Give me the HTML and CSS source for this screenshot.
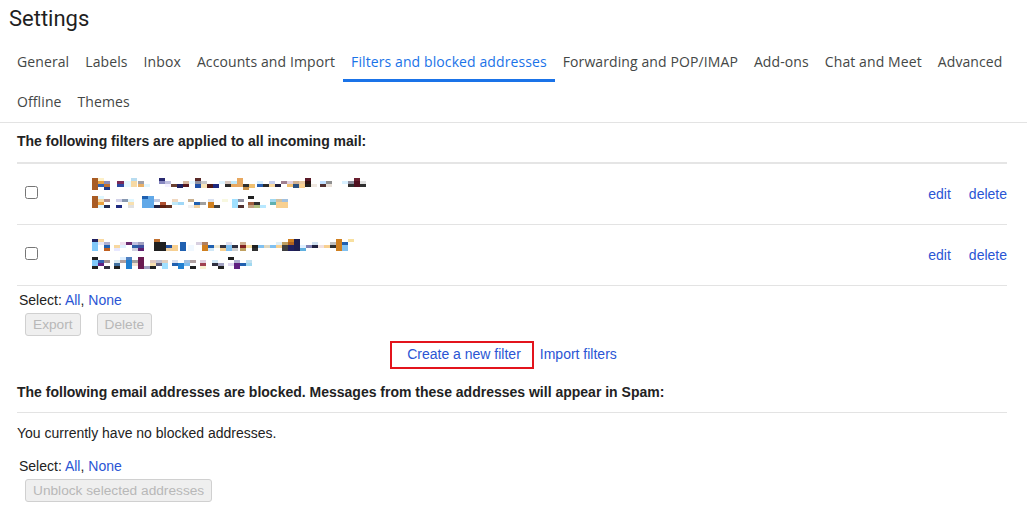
FILE: index.html
```html
<!DOCTYPE html>
<html lang="en">
<head>
<meta charset="utf-8">
<title>Settings</title>
<link rel="stylesheet" href="styles.css">
</head>
<body>
<h1 class="title">Settings</h1>
<nav class="tabs">
  <div class="tab-row">
    <span class="tab">General</span>
    <span class="tab">Labels</span>
    <span class="tab">Inbox</span>
    <span class="tab">Accounts and Import</span>
    <span class="tab active">Filters and blocked addresses</span>
    <span class="tab">Forwarding and POP/IMAP</span>
    <span class="tab">Add-ons</span>
    <span class="tab">Chat and Meet</span>
    <span class="tab">Advanced</span>
  </div>
  <div class="tab-row">
    <span class="tab">Offline</span>
    <span class="tab">Themes</span>
  </div>
</nav>
<main class="content">
  <div class="heading">The following filters are applied to all incoming mail:</div>
  <div class="filters">
    <div class="filter-row">
      <div class="check-cell"><input type="checkbox" class="cb"></div>
      <div class="desc">
        <svg class="mosaic" width="280" height="12" viewBox="0 0 280 12">
          <rect x="0" y="0" width="6" height="12" fill="#a95c24"/><rect x="6" y="0" width="6" height="3" fill="#fdf0c8"/><rect x="6" y="3" width="6" height="3" fill="#e8a040"/><rect x="6" y="6" width="6" height="3" fill="#3060b0"/><rect x="12" y="3" width="6" height="3" fill="#8c8cb8"/><rect x="12" y="6" width="6" height="3" fill="#c07030"/><rect x="12" y="9" width="6" height="3" fill="#203a88"/>
          <rect x="25" y="3" width="7" height="3" fill="#7a2a58"/><rect x="25" y="6" width="7" height="3" fill="#2c48a0"/><rect x="32" y="3" width="7" height="6" fill="#e4f8ff"/><rect x="39" y="0" width="6" height="3" fill="#b8dcf0"/><rect x="39" y="3" width="6" height="6" fill="#f6d9a4"/>
          <rect x="46" y="3" width="6" height="3" fill="#a0a0a8"/><rect x="46" y="6" width="6" height="3" fill="#e8b068"/><rect x="52" y="6" width="6" height="3" fill="#e0f6ff"/>
          <rect x="67" y="0" width="6" height="3" fill="#2a2a70"/><rect x="67" y="3" width="6" height="3" fill="#8888c0"/><rect x="73" y="3" width="6" height="3" fill="#c0c0e0"/><rect x="73" y="6" width="6" height="3" fill="#f4f0ff"/><rect x="79" y="6" width="6" height="3" fill="#6a4030"/><rect x="85" y="6" width="6" height="4" fill="#1e2060"/><rect x="91" y="3" width="6" height="3" fill="#d8b8a0"/><rect x="91" y="6" width="6" height="3" fill="#5a1a20"/><rect x="97" y="3" width="6" height="3" fill="#e8f8ff"/><rect x="103" y="0" width="6" height="3" fill="#5a2a28"/><rect x="103" y="3" width="6" height="3" fill="#9090a0"/><rect x="103" y="6" width="6" height="4" fill="#2050a8"/><rect x="109" y="3" width="6" height="3" fill="#c8c8c8"/><rect x="109" y="6" width="6" height="4" fill="#f8e4b8"/>
          <rect x="115" y="6" width="6" height="4" fill="#501818"/><rect x="121" y="6" width="6" height="4" fill="#1e2a80"/><rect x="127" y="3" width="6" height="3" fill="#e0f4ff"/><rect x="133" y="3" width="6" height="3" fill="#d8c8c0"/><rect x="133" y="6" width="6" height="3" fill="#2a2a2a"/><rect x="139" y="3" width="6" height="3" fill="#c0e8f8"/><rect x="139" y="6" width="6" height="3" fill="#e8a860"/><rect x="145" y="0" width="6" height="9" fill="#e8a860"/><rect x="151" y="6" width="6" height="3" fill="#303030"/><rect x="151" y="9" width="6" height="3" fill="#c89048"/><rect x="157" y="6" width="6" height="4" fill="#f0c070"/>
          <rect x="165" y="3" width="6" height="3" fill="#d8f0ff"/><rect x="165" y="6" width="6" height="3" fill="#2a60b0"/><rect x="171" y="6" width="6" height="3" fill="#2a2a2a"/><rect x="177" y="3" width="6" height="3" fill="#c8d0f0"/><rect x="177" y="6" width="6" height="3" fill="#f8d8a0"/><rect x="183" y="6" width="6" height="3" fill="#202040"/><rect x="189" y="3" width="6" height="3" fill="#a08090"/><rect x="195" y="3" width="6" height="3" fill="#e0d0e0"/><rect x="195" y="6" width="6" height="3" fill="#f0c070"/><rect x="201" y="3" width="6" height="3" fill="#d0b090"/><rect x="201" y="6" width="6" height="4" fill="#2a5080"/><rect x="207" y="3" width="6" height="3" fill="#e8c8a0"/><rect x="207" y="6" width="6" height="4" fill="#f8d090"/>
          <rect x="213" y="0" width="6" height="3" fill="#5a1a28"/><rect x="213" y="3" width="6" height="3" fill="#301010"/><rect x="213" y="6" width="6" height="3" fill="#202020"/><rect x="219" y="6" width="6" height="3" fill="#f0e8e0"/><rect x="228" y="3" width="6" height="3" fill="#c0e0ff"/><rect x="228" y="6" width="6" height="3" fill="#503030"/><rect x="234" y="3" width="6" height="3" fill="#909090"/><rect x="234" y="6" width="6" height="3" fill="#e8e0d8"/>
          <rect x="250" y="3" width="6" height="3" fill="#d8f0ff"/><rect x="256" y="3" width="6" height="3" fill="#9090a0"/><rect x="256" y="6" width="6" height="3" fill="#303030"/><rect x="262" y="0" width="6" height="3" fill="#6a2030"/><rect x="262" y="3" width="6" height="6" fill="#501020"/><rect x="268" y="3" width="6" height="3" fill="#e0e0e0"/><rect x="268" y="6" width="6" height="3" fill="#303030"/>
        </svg>
        <svg class="mosaic" width="280" height="12" viewBox="0 0 280 12">
          <rect x="0" y="0" width="6" height="12" fill="#a95c24"/><rect x="6" y="0" width="6" height="3" fill="#dff6ff"/><rect x="6" y="3" width="6" height="3" fill="#f6d9a4"/><rect x="6" y="6" width="6" height="3" fill="#e8a040"/><rect x="6" y="9" width="6" height="3" fill="#dff6ff"/><rect x="12" y="3" width="6" height="3" fill="#b09090"/><rect x="12" y="9" width="6" height="3" fill="#202a50"/>
          <rect x="24" y="3" width="6" height="3" fill="#d0d0e8"/><rect x="24" y="9" width="6" height="3" fill="#1e2a80"/><rect x="30" y="3" width="6" height="3" fill="#8898b0"/><rect x="36" y="3" width="6" height="3" fill="#dff6ff"/><rect x="36" y="6" width="6" height="3" fill="#f8e0b0"/><rect x="36" y="9" width="6" height="3" fill="#e0e0e0"/>
          <rect x="50" y="0" width="6" height="3" fill="#1e60b0"/><rect x="50" y="3" width="6" height="9" fill="#60a8e8"/><rect x="56" y="0" width="6" height="12" fill="#60a8e8"/><rect x="62" y="3" width="6" height="3" fill="#c0c8e0"/><rect x="62" y="9" width="6" height="3" fill="#202040"/><rect x="68" y="6" width="6" height="3" fill="#b05030"/><rect x="68" y="9" width="6" height="3" fill="#602010"/><rect x="74" y="9" width="6" height="3" fill="#603020"/><rect x="80" y="3" width="6" height="3" fill="#f0d8c0"/><rect x="80" y="6" width="6" height="3" fill="#c0e8f8"/><rect x="86" y="6" width="6" height="3" fill="#a0d8f8"/>
          <rect x="96" y="3" width="6" height="3" fill="#c8b090"/><rect x="96" y="9" width="6" height="3" fill="#f0f0f0"/><rect x="102" y="6" width="6" height="3" fill="#2060b0"/><rect x="102" y="9" width="6" height="3" fill="#f0d0a0"/><rect x="108" y="6" width="6" height="3" fill="#a0a0a0"/><rect x="116" y="3" width="6" height="3" fill="#d8e0f0"/><rect x="116" y="6" width="6" height="6" fill="#d08020"/><rect x="122" y="9" width="6" height="3" fill="#404040"/><rect x="130" y="3" width="6" height="3" fill="#f8f8e0"/>
          <rect x="140" y="3" width="6" height="9" fill="#a0e0ff"/><rect x="146" y="3" width="6" height="3" fill="#9090a0"/><rect x="146" y="9" width="6" height="3" fill="#503030"/><rect x="156" y="0" width="6" height="3" fill="#202020"/><rect x="156" y="6" width="6" height="3" fill="#a06040"/><rect x="156" y="9" width="6" height="3" fill="#c0a080"/><rect x="162" y="6" width="6" height="3" fill="#303030"/><rect x="162" y="9" width="6" height="3" fill="#b0c080"/><rect x="168" y="9" width="6" height="3" fill="#b8e8ff"/>
          <rect x="178" y="3" width="6" height="3" fill="#a0d8f0"/><rect x="178" y="6" width="6" height="3" fill="#60b0b0"/><rect x="184" y="3" width="6" height="3" fill="#d0c0a0"/><rect x="184" y="6" width="6" height="6" fill="#f8d090"/><rect x="190" y="3" width="6" height="3" fill="#a0c0e0"/><rect x="190" y="6" width="6" height="6" fill="#f8d090"/>
        </svg>
      </div>
      <div class="actions"><a class="link">edit</a><a class="link">delete</a></div>
    </div>
    <div class="filter-row">
      <div class="check-cell"><input type="checkbox" class="cb"></div>
      <div class="desc">
        <svg class="mosaic" width="280" height="12" viewBox="0 0 280 12">
          <rect x="0" y="0" width="6" height="3" fill="#202060"/><rect x="0" y="3" width="6" height="9" fill="#80c8f8"/><rect x="6" y="0" width="6" height="3" fill="#f8d8a0"/><rect x="6" y="3" width="6" height="3" fill="#e8e8f8"/><rect x="12" y="3" width="6" height="3" fill="#b0b0d0"/><rect x="12" y="6" width="6" height="3" fill="#2060b0"/><rect x="12" y="9" width="6" height="3" fill="#c06020"/>
          <rect x="22" y="6" width="6" height="3" fill="#f8d8a0"/><rect x="22" y="9" width="6" height="3" fill="#e8e8ff"/><rect x="28" y="3" width="6" height="3" fill="#f0e0f0"/><rect x="28" y="6" width="6" height="3" fill="#e0f0ff"/><rect x="34" y="3" width="6" height="3" fill="#6a2a70"/><rect x="40" y="3" width="6" height="3" fill="#c0c0e0"/><rect x="40" y="6" width="6" height="3" fill="#3060a8"/><rect x="40" y="9" width="6" height="3" fill="#d0d0e0"/><rect x="46" y="3" width="6" height="3" fill="#a0a0c0"/><rect x="46" y="6" width="6" height="3" fill="#4050a0"/><rect x="46" y="9" width="6" height="3" fill="#602070"/>
          <rect x="62" y="0" width="6" height="3" fill="#c07030"/><rect x="62" y="3" width="6" height="9" fill="#202020"/><rect x="68" y="3" width="6" height="9" fill="#202020"/><rect x="74" y="6" width="6" height="3" fill="#2050a0"/><rect x="74" y="9" width="6" height="3" fill="#f0d0a0"/><rect x="80" y="6" width="6" height="6" fill="#f8d090"/><rect x="88" y="3" width="6" height="9" fill="#2060b0"/><rect x="96" y="6" width="6" height="6" fill="#f0f8ff"/>
          <rect x="104" y="3" width="6" height="3" fill="#d8d0e0"/><rect x="110" y="3" width="6" height="3" fill="#b08060"/><rect x="110" y="6" width="6" height="6" fill="#d08020"/><rect x="116" y="6" width="6" height="3" fill="#2060b0"/><rect x="116" y="9" width="6" height="3" fill="#d0e8f8"/><rect x="122" y="6" width="6" height="3" fill="#f0e8d0"/><rect x="128" y="6" width="6" height="3" fill="#303040"/><rect x="128" y="9" width="6" height="3" fill="#f8d090"/><rect x="134" y="3" width="6" height="3" fill="#e0e0f0"/><rect x="134" y="6" width="6" height="6" fill="#80c0f0"/><rect x="140" y="6" width="6" height="3" fill="#303040"/><rect x="140" y="9" width="6" height="3" fill="#d0d0d0"/>
          <rect x="148" y="3" width="6" height="3" fill="#d0b090"/><rect x="148" y="6" width="6" height="3" fill="#802020"/><rect x="148" y="9" width="6" height="3" fill="#c0a060"/><rect x="154" y="6" width="6" height="3" fill="#f8e0a0"/><rect x="160" y="6" width="6" height="3" fill="#202020"/><rect x="160" y="9" width="6" height="3" fill="#303030"/><rect x="166" y="6" width="6" height="3" fill="#80c0f0"/><rect x="172" y="6" width="6" height="3" fill="#e0d8c0"/><rect x="178" y="6" width="6" height="3" fill="#80c0f0"/><rect x="184" y="3" width="6" height="3" fill="#e0f0f8"/><rect x="184" y="6" width="6" height="3" fill="#f8d090"/><rect x="190" y="3" width="6" height="3" fill="#c0a060"/><rect x="190" y="6" width="6" height="6" fill="#404040"/>
          <rect x="196" y="0" width="6" height="3" fill="#d08020"/><rect x="196" y="3" width="6" height="3" fill="#b06020"/><rect x="196" y="6" width="6" height="6" fill="#202060"/><rect x="202" y="0" width="6" height="12" fill="#1e1e50"/><rect x="208" y="6" width="6" height="3" fill="#e0f0ff"/><rect x="208" y="9" width="6" height="3" fill="#60b0e0"/><rect x="214" y="6" width="6" height="3" fill="#8080b0"/><rect x="220" y="3" width="6" height="3" fill="#d0e0f0"/><rect x="220" y="6" width="6" height="3" fill="#202040"/><rect x="226" y="6" width="6" height="3" fill="#f0e0e0"/><rect x="232" y="6" width="6" height="3" fill="#f8d090"/><rect x="238" y="3" width="6" height="3" fill="#c0c0c0"/><rect x="238" y="6" width="6" height="3" fill="#303030"/><rect x="244" y="0" width="6" height="12" fill="#d08020"/><rect x="250" y="3" width="6" height="3" fill="#2060b0"/><rect x="250" y="6" width="6" height="6" fill="#80c0f0"/><rect x="256" y="0" width="6" height="3" fill="#f8e0a0"/>
        </svg>
        <svg class="mosaic" width="280" height="12" viewBox="0 0 280 12">
          <rect x="0" y="0" width="6" height="3" fill="#202020"/><rect x="0" y="3" width="6" height="6" fill="#80c8f8"/><rect x="0" y="9" width="6" height="3" fill="#202020"/><rect x="6" y="3" width="6" height="3" fill="#3060b0"/><rect x="6" y="6" width="6" height="3" fill="#602080"/><rect x="12" y="3" width="6" height="3" fill="#a09090"/><rect x="12" y="9" width="6" height="3" fill="#303040"/>
          <rect x="22" y="3" width="6" height="3" fill="#d8e8f0"/><rect x="22" y="6" width="6" height="3" fill="#4070a0"/><rect x="22" y="9" width="6" height="3" fill="#202020"/><rect x="28" y="0" width="6" height="3" fill="#e0f0ff"/><rect x="28" y="3" width="6" height="3" fill="#b0a0a0"/><rect x="34" y="0" width="6" height="3" fill="#5080c0"/><rect x="34" y="3" width="6" height="9" fill="#2080d0"/><rect x="40" y="3" width="6" height="3" fill="#a0a0a0"/><rect x="40" y="6" width="6" height="3" fill="#f0e0d0"/><rect x="46" y="0" width="6" height="12" fill="#6a1a50"/><rect x="52" y="9" width="6" height="3" fill="#a0a0c0"/>
          <rect x="58" y="3" width="6" height="3" fill="#e0c8c0"/><rect x="58" y="6" width="6" height="3" fill="#f8e0b0"/><rect x="58" y="9" width="6" height="3" fill="#202020"/><rect x="64" y="3" width="6" height="3" fill="#c0c0d0"/><rect x="64" y="6" width="6" height="3" fill="#606080"/><rect x="70" y="3" width="6" height="3" fill="#e0d0c0"/><rect x="70" y="6" width="6" height="6" fill="#a0e0ff"/>
          <rect x="80" y="3" width="6" height="3" fill="#d8e0f0"/><rect x="80" y="6" width="6" height="3" fill="#2060b0"/><rect x="86" y="6" width="6" height="6" fill="#2080d0"/><rect x="92" y="3" width="6" height="3" fill="#a0c0e0"/><rect x="92" y="6" width="6" height="3" fill="#80c0f0"/><rect x="98" y="3" width="6" height="3" fill="#b0a0a0"/><rect x="98" y="9" width="6" height="3" fill="#202020"/>
          <rect x="108" y="3" width="6" height="3" fill="#e0d0e0"/><rect x="108" y="6" width="6" height="3" fill="#a04050"/><rect x="108" y="9" width="6" height="3" fill="#f8f0d0"/><rect x="120" y="3" width="6" height="3" fill="#d0e8f8"/><rect x="120" y="6" width="6" height="3" fill="#303040"/><rect x="126" y="6" width="6" height="3" fill="#a0a0c0"/><rect x="126" y="9" width="6" height="3" fill="#202020"/>
          <rect x="136" y="0" width="6" height="3" fill="#202020"/><rect x="136" y="6" width="6" height="3" fill="#e0d8f0"/><rect x="142" y="3" width="6" height="3" fill="#b0b0d0"/><rect x="142" y="6" width="6" height="6" fill="#602080"/><rect x="148" y="6" width="6" height="3" fill="#2060b0"/><rect x="154" y="3" width="6" height="3" fill="#c0e0f0"/><rect x="154" y="6" width="6" height="3" fill="#a0d8f0"/>
        </svg>
      </div>
      <div class="actions"><a class="link">edit</a><a class="link">delete</a></div>
    </div>
  </div>
  <div class="select-row">Select: <a class="link">All</a>, <a class="link">None</a></div>
  <div class="btn-row">
    <button class="btn" disabled>Export</button>
    <button class="btn" disabled>Delete</button>
  </div>
  <div class="create-row">
    <a class="link create">Create a new filter</a><a class="link import">Import filters</a>
  </div>
  <div class="heading heading-blocked">The following email addresses are blocked. Messages from these addresses will appear in Spam:</div>
  <div class="blocked-empty">You currently have no blocked addresses.</div>
  <div class="select-row select-blocked">Select: <a class="link">All</a>, <a class="link">None</a></div>
  <div class="btn-row">
    <button class="btn" disabled>Unblock selected addresses</button>
  </div>
</main>
</body>
</html>
```
FILE: styles.css
```css
* { box-sizing: border-box; }

body {
  margin: 0;
  background: #fff;
  color: #222;
  font-family: "Liberation Sans", Arial, sans-serif;
  font-size: 14px;
}

.title {
  margin: 0;
  padding: 5px 0 0 9px;
  font-family: Roboto, "Open Sans", sans-serif;
  font-weight: 400;
  font-size: 22px;
  line-height: 28px;
  color: #1f1f1f;
}

.tabs {
  margin-top: 9px;
  padding-left: 9px;
  border-bottom: 1px solid #e3e3e3;
}

.tab-row {
  display: flex;
  height: 40px;
}

.tab {
  display: flex;
  align-items: center;
  padding: 0 8px 2px;
  font-family: "Open Sans", Roboto, sans-serif;
  font-size: 14px;
  letter-spacing: 0.1px;
  color: #444746;
  white-space: nowrap;
}

.tab.active {
  color: #1a73e8;
  box-shadow: inset 0 -3px 0 #1a73e8;
}

.content {
  padding: 8px 20px 0 17px;
}

.heading {
  font-weight: 700;
  line-height: 20px;
  margin-bottom: 11px;
}

.filters {
  border-top: 2px solid #e5e5e5;
}

.filter-row {
  display: grid;
  grid-template-columns: 75px 1fr auto;
  height: 61px;
  border-bottom: 1px solid #e3e3e3;
}

.check-cell {
  display: flex;
  align-items: center;
  padding-left: 8px;
  padding-bottom: 3px;
  box-shadow: 0 1px 0 #e3e3e3;
}

.cb {
  width: 13px;
  height: 13px;
  margin: 0;
}

.desc {
  display: flex;
  flex-direction: column;
  justify-content: center;
  gap: 6px;
  padding-bottom: 3px;
}

.mosaic { display: block; }

.actions {
  display: flex;
  align-items: center;
  gap: 18px;
}

.link {
  color: #2a55d4;
  text-decoration: none;
  cursor: pointer;
}

.select-row {
  line-height: 20px;
  padding-left: 2px;
  margin-top: 4px;
}

.btn-row {
  display: flex;
  gap: 16px;
  padding-left: 8px;
  margin-top: 3px;
}

.btn {
  height: 23px;
  padding: 0 7px;
  border: 1px solid #d0d0d0;
  border-radius: 3px;
  background: #efefef;
  color: #b8b8b8;
  font-family: "Liberation Sans", Arial, sans-serif;
  font-size: 13.7px;
}

.create-row {
  margin-top: 8px;
  line-height: 20px;
  text-align: center;
}

.create {
  position: relative;
}

.create::before {
  content: "";
  position: absolute;
  left: -17px;
  right: -13px;
  top: -5px;
  bottom: -7px;
  border: 2px solid #e3141c;
}

.import {
  margin-left: 19px;
}

.heading-blocked {
  margin-top: 18px;
  margin-bottom: 10px;
  border-bottom: 1px solid #e3e3e3;
  height: 31px;
}

.blocked-empty {
  line-height: 20px;
  margin-top: 10px;
}

.select-blocked {
  margin-top: 13px;
}
```
